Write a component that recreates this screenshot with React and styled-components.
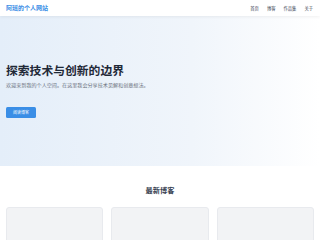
import React from 'react';
import styled, { createGlobalStyle } from 'styled-components';

const GlobalStyle = createGlobalStyle`
  * { box-sizing: border-box; }
  body {
    margin: 0;
    background: #fff;
    font-family: "Noto Sans", "Noto Sans CJK SC", sans-serif;
    color: #1f2937;
  }
`;

const Page = styled.div`
  height: 100vh;
  overflow: hidden;
`;

const Header = styled.header`
  height: 16px;
  padding: 0 7px 0 6px;
  display: flex;
  align-items: center;
  justify-content: space-between;
  background: #fff;
  box-shadow: 0 1px 3px rgba(0, 0, 0, 0.06);
  position: relative;
  z-index: 1;
`;

const Logo = styled.a`
  font-size: 6px;
  font-weight: 700;
  color: #3a8ee6;
  text-decoration: none;
  line-height: 1;
`;

const Nav = styled.ul`
  display: flex;
  gap: 8px;
  margin: 0;
  padding: 0;
  list-style: none;
  li {
    font-size: 4.3px;
    color: #374151;
    line-height: 1;
  }
`;

const Hero = styled.section`
  height: 150px;
  padding: 0 6px;
  display: flex;
  flex-direction: column;
  justify-content: center;
  background: linear-gradient(90deg, #e4eef9 0%, #f0f5fb 60%, #ffffff 100%);
`;

const Title = styled.h1`
  margin: 0 0 4px;
  font-size: 11.8px;
  font-weight: 700;
  line-height: 1.2;
  color: #1f2937;
`;

const Lead = styled.p`
  margin: 0 0 9px;
  font-size: 5.1px;
  line-height: 1.2;
  color: #6b7280;
`;

const Button = styled.button`
  width: 30px;
  height: 11px;
  padding: 0;
  border: none;
  border-radius: 1.5px;
  background: #3a8ee6;
  color: #fff;
  font-family: inherit;
  font-size: 4px;
  line-height: 1;
`;

const Section = styled.section`
  padding: 20px 6px 0;
`;

const SectionTitle = styled.h2`
  margin: 0 0 12px;
  text-align: center;
  font-size: 7.2px;
  font-weight: 700;
  line-height: 1.2;
  color: #374151;
`;

const Cards = styled.div`
  display: grid;
  grid-template-columns: repeat(3, 1fr);
  gap: 8px;
`;

const Card = styled.div`
  height: 60px;
  border: 1px solid #e8eaee;
  border-radius: 3px;
  background: #f2f3f5;
`;

export default function App() {
  return (
    <Page>
      <GlobalStyle />
      <Header>
        <Logo href="#">阿瑶的个人网站</Logo>
        <Nav>
          <li>首页</li>
          <li>博客</li>
          <li>作品集</li>
          <li>关于</li>
        </Nav>
      </Header>
      <Hero>
        <Title>探索技术与创新的边界</Title>
        <Lead>欢迎来到我的个人空间。在这里我会分享技术见解和创意想法。</Lead>
        <div>
          <Button type="button">阅读博客</Button>
        </div>
      </Hero>
      <Section>
        <SectionTitle>最新博客</SectionTitle>
        <Cards>
          <Card />
          <Card />
          <Card />
        </Cards>
      </Section>
    </Page>
  );
}
